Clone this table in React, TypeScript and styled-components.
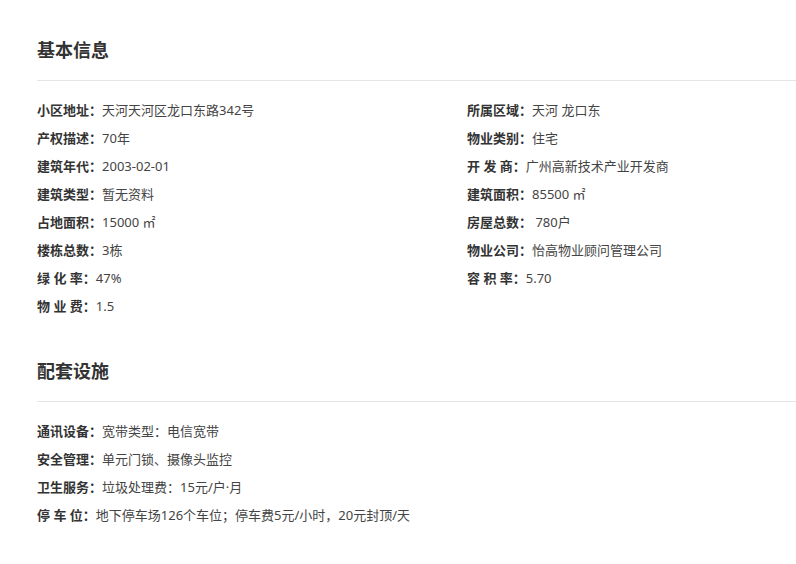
import React from 'react';
import styled, { createGlobalStyle } from 'styled-components';

const GlobalStyle = createGlobalStyle`
  html, body {
    margin: 0;
    padding: 0;
    background: #fff;
  }
  body {
    font-family: "Noto Sans", "Noto Sans CJK SC", sans-serif;
    color: #333;
  }
`;

const Page = styled.div`
  padding: 38px 0 30px 37px;
`;

const Section = styled.section`
  & + & {
    margin-top: 39px;
  }
`;

const Title = styled.h2`
  margin: 0;
  padding-bottom: 18px;
  border-bottom: 1px solid #e5e5e5;
  font-size: 18px;
  line-height: 24px;
  font-weight: bold;
  color: #333;
`;

const Grid = styled.div<{ $cols: number }>`
  display: grid;
  grid-template-columns: ${(p) => (p.$cols === 2 ? '430px 1fr' : '1fr')};
  padding-top: 15px;
`;

const Column = styled.div`
  display: flex;
  flex-direction: column;
`;

const Row = styled.div`
  font-size: 13px;
  line-height: 28px;
  color: #333;
  white-space: nowrap;
`;

const Label = styled.span`
  font-weight: bold;
  color: #333;
`;

const Value = styled.span`
  color: #444;
`;

type Item = [string, string];

const basicLeft: Item[] = [
  ['小区地址：', '天河天河区龙口东路342号'],
  ['产权描述：', '70年'],
  ['建筑年代：', '2003-02-01'],
  ['建筑类型：', '暂无资料'],
  ['占地面积：', '15000 ㎡'],
  ['楼栋总数：', '3栋'],
  ['绿 化 率：', '47%'],
  ['物 业 费：', '1.5'],
];

const basicRight: Item[] = [
  ['所属区域：', '天河 龙口东'],
  ['物业类别：', '住宅'],
  ['开 发 商：', '广州高新技术产业开发商'],
  ['建筑面积：', '85500 ㎡'],
  ['房屋总数：', '\u00a0780户'],
  ['物业公司：', '怡高物业顾问管理公司'],
  ['容 积 率：', '5.70'],
];

const facilities: Item[] = [
  ['通讯设备：', '宽带类型：电信宽带'],
  ['安全管理：', '单元门锁、摄像头监控'],
  ['卫生服务：', '垃圾处理费：15元/户·月'],
  ['停 车 位：', '地下停车场126个车位；停车费5元/小时，20元封顶/天'],
];

const InfoList = ({ items }: { items: Item[] }) => (
  <Column>
    {items.map(([label, value]) => (
      <Row key={label}>
        <Label>{label}</Label>
        <Value>{value}</Value>
      </Row>
    ))}
  </Column>
);

export default function App() {
  return (
    <>
      <GlobalStyle />
      <Page>
        <Section>
          <Title>基本信息</Title>
          <Grid $cols={2}>
            <InfoList items={basicLeft} />
            <InfoList items={basicRight} />
          </Grid>
        </Section>
        <Section>
          <Title>配套设施</Title>
          <Grid $cols={1}>
            <InfoList items={facilities} />
          </Grid>
        </Section>
      </Page>
    </>
  );
}
